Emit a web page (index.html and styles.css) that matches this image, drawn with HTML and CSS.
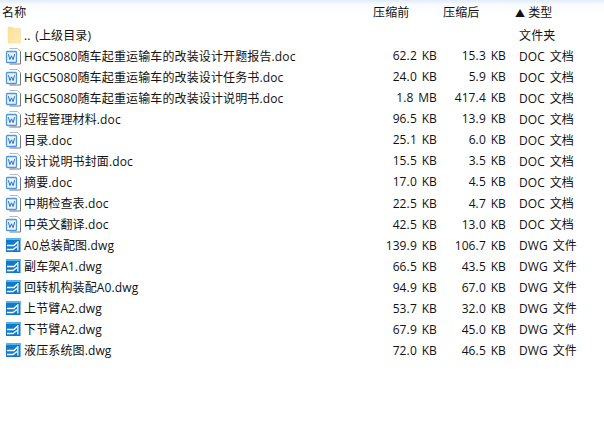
FILE: index.html
```html
<!DOCTYPE html>
<html lang="zh">
<head>
    <meta charset="UTF-8">
    <title>压缩文件列表</title>
    <link rel="stylesheet" href="styles.css">
</head>
<body>
    <svg class="defs" width="0" height="0">
        <defs>
            <linearGradient id="folderFill" x1="0" y1="0" x2="1" y2="1">
                <stop offset="0" stop-color="#fbdf94"/>
                <stop offset="1" stop-color="#fdebb8"/>
            </linearGradient>
        </defs>
        <symbol id="folder" viewBox="0 0 16 18">
            <path d="M3 2 Q3 1 4 1 H7.5 L9 2.5 H15 Q15.5 2.5 15.5 3 V17 H3 Z" fill="url(#folderFill)" stroke="#f1d88f" stroke-width="0.5"/>
        </symbol>
        <symbol id="doc" viewBox="0 0 16 18">
            <path d="M4.5 1.5 H12.5 L15.5 4.5" fill="none" stroke="#b4bac4"/>
            <path d="M15.5 4.5 V17 H4.5" fill="none" stroke="#6f7682"/>
            <rect x="1.5" y="4.5" width="10" height="11" rx="1" fill="#eaf3fc" stroke="#4f97dc" stroke-width="1.3"/>
            <path d="M3.4 7.2 L4.9 12.6 L6.5 8.8 L8.1 12.6 L9.6 7.2" fill="none" stroke="#2a6fc0" stroke-width="1"/>
        </symbol>
        <symbol id="dwg" viewBox="0 0 16 18">
            <rect x="1" y="2" width="14.5" height="14" fill="#1379c9"/>
            <path d="M1 3 H15.5" stroke="#58b2ec" stroke-width="2"/>
            <path d="M2 9.5 H9 L12 6.5 M2 13.5 H8 L12 10.5" fill="none" stroke="#fff" stroke-width="1.3"/>
            <rect x="12" y="5" width="1.6" height="9.5" fill="#c4e6fa"/>
        </symbol>
    </svg>

    <div class="list">
        <div class="row head">
            <span class="name">名称</span>
            <span class="size">压缩前</span>
            <span class="size">压缩后</span>
            <span class="type"><i class="arrow">▲</i>类型</span>
        </div>

        <div class="row"><span class="name"><svg class="icon"><use href="#folder"/></svg>.. (上级目录)</span><span class="size"></span><span class="size"></span><span class="type">文件夹</span></div>
        <div class="row"><span class="name"><svg class="icon"><use href="#doc"/></svg>HGC5080随车起重运输车的改装设计开题报告.doc</span><span class="size">62.2 KB</span><span class="size">15.3 KB</span><span class="type">DOC 文档</span></div>
        <div class="row"><span class="name"><svg class="icon"><use href="#doc"/></svg>HGC5080随车起重运输车的改装设计任务书.doc</span><span class="size">24.0 KB</span><span class="size">5.9 KB</span><span class="type">DOC 文档</span></div>
        <div class="row"><span class="name"><svg class="icon"><use href="#doc"/></svg>HGC5080随车起重运输车的改装设计说明书.doc</span><span class="size">1.8 MB</span><span class="size">417.4 KB</span><span class="type">DOC 文档</span></div>
        <div class="row"><span class="name"><svg class="icon"><use href="#doc"/></svg>过程管理材料.doc</span><span class="size">96.5 KB</span><span class="size">13.9 KB</span><span class="type">DOC 文档</span></div>
        <div class="row"><span class="name"><svg class="icon"><use href="#doc"/></svg>目录.doc</span><span class="size">25.1 KB</span><span class="size">6.0 KB</span><span class="type">DOC 文档</span></div>
        <div class="row"><span class="name"><svg class="icon"><use href="#doc"/></svg>设计说明书封面.doc</span><span class="size">15.5 KB</span><span class="size">3.5 KB</span><span class="type">DOC 文档</span></div>
        <div class="row"><span class="name"><svg class="icon"><use href="#doc"/></svg>摘要.doc</span><span class="size">17.0 KB</span><span class="size">4.5 KB</span><span class="type">DOC 文档</span></div>
        <div class="row"><span class="name"><svg class="icon"><use href="#doc"/></svg>中期检查表.doc</span><span class="size">22.5 KB</span><span class="size">4.7 KB</span><span class="type">DOC 文档</span></div>
        <div class="row"><span class="name"><svg class="icon"><use href="#doc"/></svg>中英文翻译.doc</span><span class="size">42.5 KB</span><span class="size">13.0 KB</span><span class="type">DOC 文档</span></div>
        <div class="row"><span class="name"><svg class="icon"><use href="#dwg"/></svg>A0总装配图.dwg</span><span class="size">139.9 KB</span><span class="size">106.7 KB</span><span class="type">DWG 文件</span></div>
        <div class="row"><span class="name"><svg class="icon"><use href="#dwg"/></svg>副车架A1.dwg</span><span class="size">66.5 KB</span><span class="size">43.5 KB</span><span class="type">DWG 文件</span></div>
        <div class="row"><span class="name"><svg class="icon"><use href="#dwg"/></svg>回转机构装配A0.dwg</span><span class="size">94.9 KB</span><span class="size">67.0 KB</span><span class="type">DWG 文件</span></div>
        <div class="row"><span class="name"><svg class="icon"><use href="#dwg"/></svg>上节臂A2.dwg</span><span class="size">53.7 KB</span><span class="size">32.0 KB</span><span class="type">DWG 文件</span></div>
        <div class="row"><span class="name"><svg class="icon"><use href="#dwg"/></svg>下节臂A2.dwg</span><span class="size">67.9 KB</span><span class="size">45.0 KB</span><span class="type">DWG 文件</span></div>
        <div class="row"><span class="name"><svg class="icon"><use href="#dwg"/></svg>液压系统图.dwg</span><span class="size">72.0 KB</span><span class="size">46.5 KB</span><span class="type">DWG 文件</span></div>
    </div>
</body>
</html>
```

FILE: styles.css
```css
html, body {
    margin: 0;
    padding: 0;
    height: 100%;
    background-color: #fff;
    overflow: hidden;
}
body {
    font-family: "Open Sans", "Noto Sans CJK SC", sans-serif;
    font-size: 12px;
    letter-spacing: 0.13px;
    word-spacing: 1.5px;
    color: #111;
}
.defs {
    display: block;
    height: 0;
}
.list {
    display: flex;
    flex-direction: column;
}
.row {
    display: grid;
    grid-template-columns: 368px 69px 69px 98px;
    align-items: center;
    height: 21.07px;
    white-space: nowrap;
}
.head {
    grid-template-columns: 368px 70px 68px 98px;
    height: 24px;
    background: linear-gradient(#dfeafa 0, #f8fbff 4px, #fff 14px);
}
.name {
    display: flex;
    align-items: center;
    padding-left: 5px;
}
.head .name {
    padding-left: 2px;
}
.icon {
    width: 16px;
    height: 18px;
    margin-right: 3px;
    flex: none;
}
.size {
    text-align: right;
}
.head .size {
    text-align: left;
    padding-left: 5px;
}
.type {
    padding-left: 13px;
}
.head .type {
    padding-left: 9px;
}
.arrow {
    font-style: normal;
    font-size: 10px;
    margin-right: 3px;
}
```
